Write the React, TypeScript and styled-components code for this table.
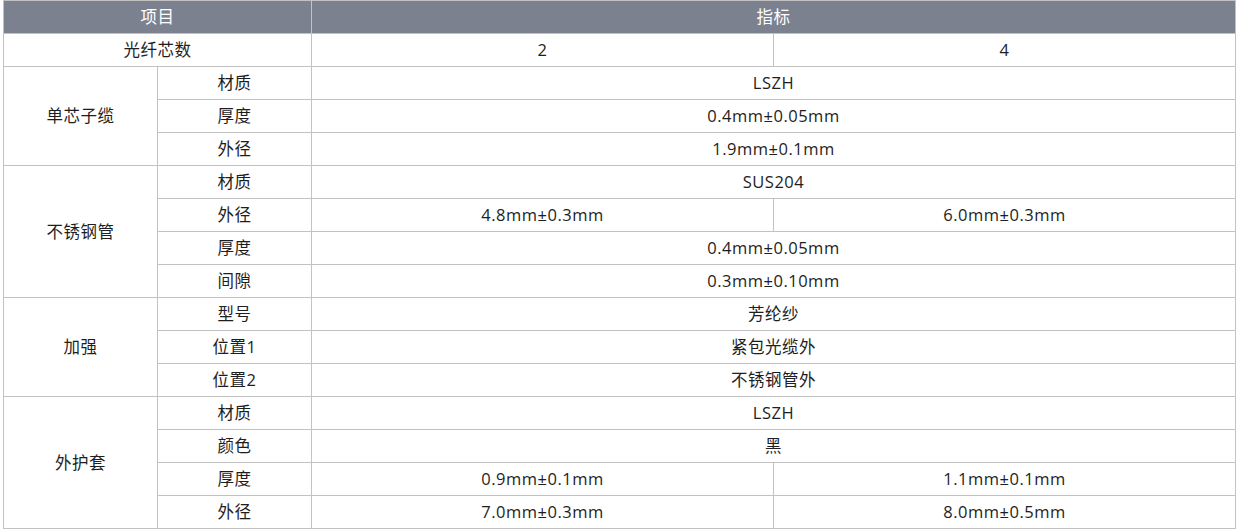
import styled, { createGlobalStyle } from "styled-components";

const GlobalStyle = createGlobalStyle`
  body {
    margin: 0;
    padding: 0 0 0 3px;
    background: #fff;
    font-family: "Open Sans", "Noto Sans CJK SC", sans-serif;
  }
`;

type Row = { group?: string; span?: number; item: string; values: string[] };

const rows: Row[] = [
  { group: "单芯子缆", span: 3, item: "材质", values: ["LSZH"] },
  { item: "厚度", values: ["0.4mm±0.05mm"] },
  { item: "外径", values: ["1.9mm±0.1mm"] },
  { group: "不锈钢管", span: 4, item: "材质", values: ["SUS204"] },
  { item: "外径", values: ["4.8mm±0.3mm", "6.0mm±0.3mm"] },
  { item: "厚度", values: ["0.4mm±0.05mm"] },
  { item: "间隙", values: ["0.3mm±0.10mm"] },
  { group: "加强", span: 3, item: "型号", values: ["芳纶纱"] },
  { item: "位置1", values: ["紧包光缆外"] },
  { item: "位置2", values: ["不锈钢管外"] },
  { group: "外护套", span: 4, item: "材质", values: ["LSZH"] },
  { item: "颜色", values: ["黑"] },
  { item: "厚度", values: ["0.9mm±0.1mm", "1.1mm±0.1mm"] },
  { item: "外径", values: ["7.0mm±0.3mm", "8.0mm±0.5mm"] },
];

export default function App() {
  return (
    <>
      <GlobalStyle />
      <Table>
        <colgroup>
          <col style={{ width: 154 }} />
          <col style={{ width: 154 }} />
          <col style={{ width: 462 }} />
          <col style={{ width: 462 }} />
        </colgroup>
        <thead>
          <tr>
            <HeadCell colSpan={2}>项目</HeadCell>
            <HeadCell colSpan={2}>指标</HeadCell>
          </tr>
        </thead>
        <tbody>
          <tr>
            <Cell colSpan={2}>光纤芯数</Cell>
            <Cell>2</Cell>
            <Cell>4</Cell>
          </tr>
          {rows.map((r, i) => (
            <tr key={i}>
              {r.group && <Cell rowSpan={r.span}>{r.group}</Cell>}
              <Cell>{r.item}</Cell>
              {r.values.length === 1 ? (
                <Cell colSpan={2}>{r.values[0]}</Cell>
              ) : (
                r.values.map((v) => <Cell key={v}>{v}</Cell>)
              )}
            </tr>
          ))}
        </tbody>
      </Table>
    </>
  );
}

const Table = styled.table`
  width: 1233px;
  border-collapse: collapse;
  table-layout: fixed;
  font-size: 16.5px;
  letter-spacing: 0.5px;
  color: #1e1e1e;
`;

const Cell = styled.td`
  height: 32px;
  padding: 0;
  border: 1px solid #c2c2c2;
  text-align: center;
  vertical-align: middle;
  line-height: 20px;
`;

const HeadCell = styled.th`
  height: 32px;
  padding: 0;
  border: 1px solid #c2c2c2;
  background: #7c8190;
  color: #fff;
  font-weight: normal;
  text-align: center;
  line-height: 20px;
`;
